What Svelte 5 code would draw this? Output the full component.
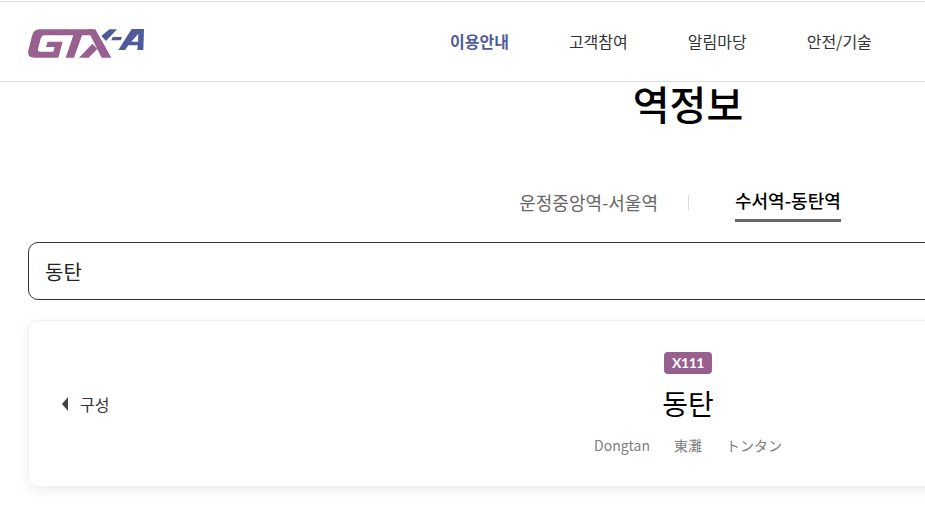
<script>
  const nav = ["이용안내", "고객참여", "알림마당", "안전/기술"];
  const names = ["Dongtan", "東灘", "トンタン"];
</script>

<div class="page">
  <header>
    <a class="logo" href="#top" aria-label="GTX-A">
      <svg width="126" height="42" viewBox="0 0 378 126">
        <g fill="#98608e">
          <path d="M45 25 H125 L119 43 H62 Q54 43 51 50 L42 83 Q40 92 50 92 H88 L92 78 H66 L71 62 H116 L103 110 H30 Q8 110 13 88 L24 45 Q29 25 45 25 Z"/>
          <path d="M122 25 H205 L200 43 H174 L150 110 H125 L148 43 H116 Z"/>
          <path d="M190 25 H214 L262 110 H233 Z"/>
          <path d="M205 68 L220 84 L194 110 H165 Z"/>
        </g>
        <g fill="#4f5b99">
          <path d="M232 45 L256 25 H279 L246 60 Z"/>
          <path d="M266 48 H294 L290 58 H262 Z"/>
          <path fill-rule="evenodd" d="M283 87 L323 24 H360 L358 87 H340 L341 73 H313 L303 87 Z M322 62 H342 L343 38 Z"/>
        </g>
      </svg>
    </a>
    <nav>
      {#each nav as item, i}
        <a href="#top" class:current={i === 0}>{item}</a>
      {/each}
    </nav>
  </header>

  <main>
    <h1>역정보</h1>

    <div class="tabs">
      <button class="tab">운정중앙역-서울역</button>
      <span class="sep"></span>
      <button class="tab active">수서역-동탄역</button>
    </div>

    <input class="search" type="text" value="동탄" aria-label="역 검색" />

    <section class="card">
      <button class="prev"><span class="arrow"></span>구성</button>
      <div class="station">
        <span class="badge">X111</span>
        <strong>동탄</strong>
        <ul>
          {#each names as name}
            <li>{name}</li>
          {/each}
        </ul>
      </div>
    </section>
  </main>
</div>

<style>
  :global(body) {
    overflow: hidden;
    background: #fff;
  }

  .page {
    width: 1376px;
    height: 527px;
    overflow: hidden;
    font-family: "Noto Sans CJK KR", "Noto Sans", sans-serif;
    color: #000;
  }

  header {
    height: 79px;
    margin-top: 1px;
    border-top: 1px solid #e4e4e4;
    border-bottom: 1px solid #ddd;
    padding-left: 24px;
    display: flex;
    align-items: center;
  }

  .logo {
    display: block;
    height: 42px;
  }

  nav {
    margin-left: 300px;
    display: flex;
    gap: 60px;
    margin-top: -2px;
  }

  nav a {
    font-size: 16px;
    color: #333;
    text-decoration: none;
  }

  nav a.current {
    color: #4f5b99;
    font-weight: 700;
  }

  main {
    width: 1320px;
    margin-left: 28px;
  }

  h1 {
    margin: 0;
    height: 42px;
    font-size: 40px;
    line-height: 42px;
    font-weight: 500;
    text-align: center;
  }

  .tabs {
    margin-top: 58px;
    height: 60px;
    padding-right: 16px;
    display: flex;
    justify-content: center;
    align-items: flex-start;
    gap: 30px;
  }

  .tab {
    padding: 0;
    height: 40px;
    border: 0;
    background: none;
    font: inherit;
    font-size: 18px;
    line-height: 37px;
    color: #666;
  }

  .tab.active {
    color: #000;
    font-weight: 500;
    border-bottom: 3px solid #666;
    line-height: 35px;
  }

  .sep {
    width: 1px;
    height: 16px;
    margin: 13px 16px 0 0;
    background: #ddd;
  }

  .search {
    display: block;
    box-sizing: border-box;
    width: 100%;
    height: 58px;
    padding: 0 16px;
    border: 1px solid #333;
    border-radius: 10px;
    font: inherit;
    font-size: 20px;
    color: #222;
    outline: none;
  }

  .card {
    box-sizing: border-box;
    height: 167px;
    margin-top: 20px;
    padding-left: 33px;
    display: flex;
    align-items: center;
    position: relative;
    border: 1px solid #f0f0f0;
    border-radius: 10px;
    box-shadow: 0 4px 14px rgba(0, 0, 0, 0.07);
  }

  .prev {
    display: flex;
    align-items: center;
    gap: 12px;
    padding: 0;
    border: 0;
    background: none;
    font: inherit;
    font-size: 16px;
    color: #333;
  }

  .arrow {
    width: 0;
    height: 0;
    border-style: solid;
    border-width: 7px 6px 7px 0;
    border-color: transparent #444 transparent transparent;
  }

  .station {
    position: absolute;
    left: 0;
    right: 0;
    top: 31px;
    display: flex;
    flex-direction: column;
    align-items: center;
  }

  .badge {
    width: 48px;
    height: 22px;
    border-radius: 4px;
    background: #98608e;
    color: #fff;
    font-family: Lato, "Noto Sans", sans-serif;
    font-size: 14px;
    font-weight: 700;
    letter-spacing: -0.4px;
    line-height: 22px;
    text-align: center;
  }

  strong {
    margin-top: 5px;
    font-size: 28px;
    font-weight: 400;
    line-height: 48px;
  }

  ul {
    margin: 8px 0 0;
    padding: 0;
    list-style: none;
    display: flex;
    gap: 24px;
    font-size: 14px;
    color: #808080;
  }
</style>
